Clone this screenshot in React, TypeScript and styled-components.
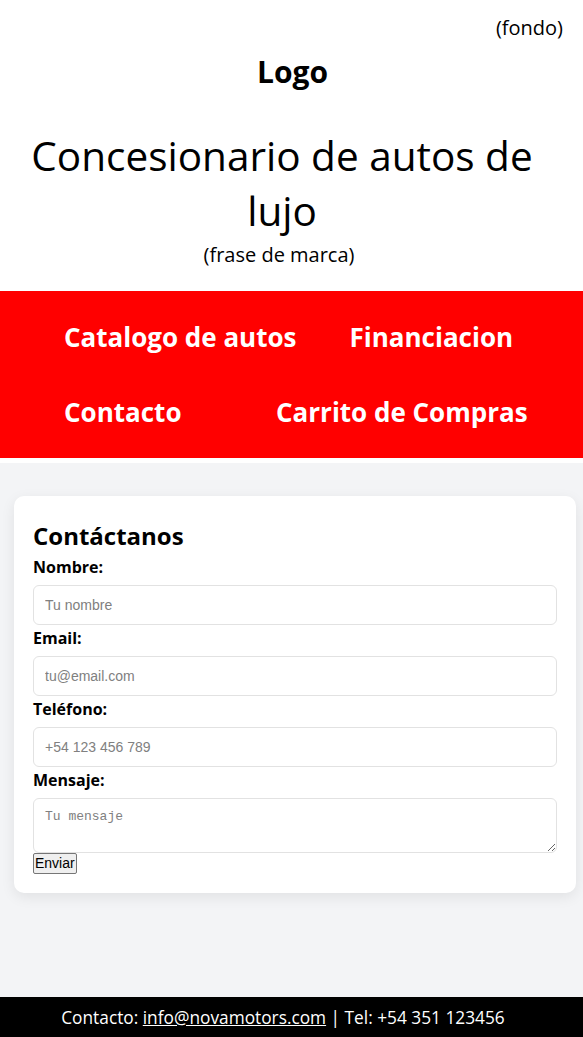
import React from "react";
import styled, { createGlobalStyle } from "styled-components";

const GlobalStyle = createGlobalStyle`
  html, body {
    margin: 0;
    padding: 0;
    background: #ffffff;
    font-family: "Open Sans", "Noto Sans", sans-serif;
    color: #000;
  }
  * {
    box-sizing: border-box;
  }
`;

const Page = styled.div`
  display: flex;
  flex-direction: column;
  min-height: 100vh;
`;

const Header = styled.header`
  display: flex;
  flex-direction: column;
  align-items: center;
  padding: 14px 0 23px;
  background: #ffffff;
`;

const Fondo = styled.div`
  align-self: flex-end;
  margin-right: 20px;
  font-size: 20px;
`;

const Logo = styled.div`
  margin: 10px 0 0 2px;
  font-size: 30px;
  font-weight: 700;
`;

const Brand = styled.div`
  display: flex;
  flex-direction: column;
  align-items: center;
  margin: 37px 19px 0 0;
  text-align: center;
`;

const Title = styled.h1`
  margin: 0;
  padding: 0 20px;
  font-size: 40.5px;
  font-weight: 400;
  line-height: 54.5px;
`;

const Tagline = styled.div`
  margin: 3px 6px 0 0;
  font-size: 20px;
`;

const Nav = styled.nav`
  background: #ff0000;
  padding: 9px 0 8px;
  margin-bottom: 5px;
`;

const NavList = styled.ul`
  display: flex;
  flex-wrap: wrap;
  column-gap: 53px;
  margin: 0;
  padding: 0 0 0 64px;
  list-style: none;
`;

const NavItem = styled.li`
  min-width: 159px;
  padding: 20px 0;
`;

const NavLink = styled.a`
  color: #ffffff;
  font-size: 26px;
  font-weight: 700;
  line-height: 35px;
  text-decoration: none;
`;

const Main = styled.main`
  flex: 1;
  background: #f3f4f6;
  padding: 33px 7px 20px 14px;
`;

const Card = styled.form`
  background: #ffffff;
  border-radius: 10px;
  padding: 19px;
  box-shadow: 0 4px 14px rgba(0, 0, 0, 0.08);
`;

const CardTitle = styled.h2`
  margin: 4px 0 4px;
  font-size: 24px;
  font-weight: 700;
  line-height: 33px;
`;

const Label = styled.label`
  display: block;
  margin-bottom: 7px;
  font-size: 16px;
  font-weight: 700;
  line-height: 22px;
`;

const Input = styled.input`
  display: block;
  width: 100%;
  height: 40px;
  margin: 0 0 2px;
  padding: 10px 11px;
  border: 1px solid #e2e2e2;
  border-radius: 6px;
  font-family: "Liberation Sans", Arial, sans-serif;
  font-size: 14px;
  color: #222;
  &::placeholder {
    color: #808080;
  }
`;

const TextArea = styled.textarea`
  display: block;
  width: 100%;
  height: 55px;
  margin: 0;
  padding: 10px 11px;
  border: 1px solid #e2e2e2;
  border-radius: 6px;
  font-family: "Liberation Mono", "DejaVu Sans Mono", monospace;
  font-size: 13px;
  &::placeholder {
    color: #808080;
  }
`;

const SendButton = styled.button`
  display: block;
  font-family: "Liberation Sans", Arial, sans-serif;
  font-size: 14px;
  padding: 1px 1px;
  color: #000;
  background: #efefef;
  border: 1px solid #767676;
  border-radius: 2px;
  line-height: 17px;
`;

const Footer = styled.footer`
  height: 40px;
  display: flex;
  align-items: center;
  justify-content: center;
  padding-right: 17px;
  background: #000000;
  color: #ffffff;
  font-size: 17.3px;
`;

const FooterLink = styled.a`
  color: #ffffff;
  text-decoration: underline;
`;

const links = ["Catalogo de autos", "Financiacion", "Contacto", "Carrito de Compras"];

const fields = [
  { id: "nombre", label: "Nombre:", type: "text", placeholder: "Tu nombre" },
  { id: "email", label: "Email:", type: "email", placeholder: "tu@email.com" },
  { id: "telefono", label: "Teléfono:", type: "tel", placeholder: "+54 123 456 789" },
];

const App: React.FC = () => {
  return (
    <>
      <GlobalStyle />
      <Page>
        <Header>
          <Fondo>(fondo)</Fondo>
          <Logo>Logo</Logo>
          <Brand>
            <Title>Concesionario de autos de lujo</Title>
            <Tagline>(frase de marca)</Tagline>
          </Brand>
        </Header>
        <Nav>
          <NavList>
            {links.map((item) => (
              <NavItem key={item}>
                <NavLink href="#">{item}</NavLink>
              </NavItem>
            ))}
          </NavList>
        </Nav>
        <Main>
          <Card onSubmit={(e) => e.preventDefault()}>
            <CardTitle>Contáctanos</CardTitle>
            {fields.map((f) => (
              <div key={f.id}>
                <Label htmlFor={f.id}>{f.label}</Label>
                <Input id={f.id} type={f.type} placeholder={f.placeholder} />
              </div>
            ))}
            <Label htmlFor="mensaje">Mensaje:</Label>
            <TextArea id="mensaje" placeholder="Tu mensaje" />
            <SendButton type="submit">Enviar</SendButton>
          </Card>
        </Main>
        <Footer>
          <span>
            Contacto: <FooterLink href="#">info@novamotors.com</FooterLink> | Tel: +54 351 123456
          </span>
        </Footer>
      </Page>
    </>
  );
};

export default App;
